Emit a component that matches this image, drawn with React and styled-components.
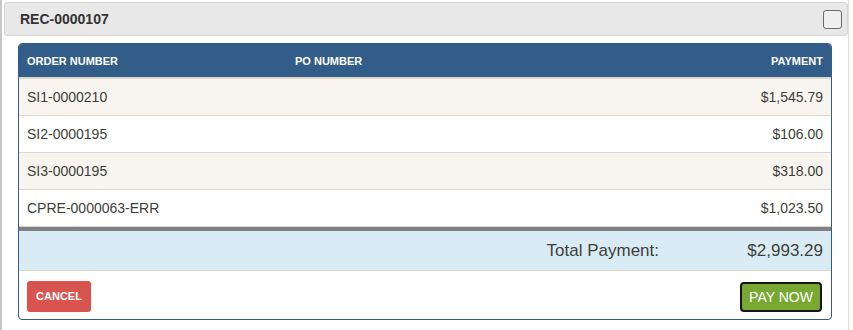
import styled, { createGlobalStyle } from "styled-components";

const GlobalStyle = createGlobalStyle`
  body {
    margin: 0;
    background: #fff;
    font-family: "Liberation Sans", Arial, sans-serif;
    color: #3e3f3a;
  }
`;

const orders = [
  { number: "SI1-0000210", po: "", payment: "$1,545.79" },
  { number: "SI2-0000195", po: "", payment: "$106.00" },
  { number: "SI3-0000195", po: "", payment: "$318.00" },
  { number: "CPRE-0000063-ERR", po: "", payment: "$1,023.50" },
];

export default function App() {
  return (
    <>
      <GlobalStyle />
      <Page>
        <Frame>
          <ReceiptBar>
            <ReceiptTitle>REC-0000107</ReceiptTitle>
            <Check />
          </ReceiptBar>
          <Panel>
            <HeadRow>
              <HeadCell>Order Number</HeadCell>
              <HeadCell>PO Number</HeadCell>
              <HeadCell align="right">Payment</HeadCell>
            </HeadRow>
            {orders.map((o, i) => (
              <Row key={o.number} striped={i % 2 === 0}>
                <Cell>{o.number}</Cell>
                <Cell>{o.po}</Cell>
                <Cell align="right">{o.payment}</Cell>
              </Row>
            ))}
            <TotalRow>
              <TotalLabel>Total Payment:</TotalLabel>
              <TotalAmount>$2,993.29</TotalAmount>
            </TotalRow>
            <Footer>
              <CancelButton>Cancel</CancelButton>
              <PayButton>PAY NOW</PayButton>
            </Footer>
          </Panel>
        </Frame>
        <Side />
      </Page>
    </>
  );
}

const Page = styled.div`
  display: flex;
  width: 853px;
  height: 330px;
  overflow: hidden;
`;

const Frame = styled.div`
  width: 844px;
  flex-shrink: 0;
  border-left: 2px solid #c6c6c6;
  border-right: 1px solid #dcdcdc;
  padding: 2px 0 0 2px;
  box-sizing: content-box;
`;

const Side = styled.div`
  flex: 1;
  background: #fbfaf6;
`;

const ReceiptBar = styled.div`
  display: flex;
  align-items: center;
  justify-content: space-between;
  height: 32px;
  background: #e8e8e8;
  border: 1px solid #d6d6d6;
  border-radius: 3px;
  padding: 0 5px 0 15px;
`;

const ReceiptTitle = styled.div`
  font-size: 14px;
  font-weight: bold;
  color: #333;
`;

const Check = styled.div`
  width: 17px;
  height: 17px;
  border: 1.5px solid #6b6b6b;
  border-radius: 3px;
  background: #efefef;
`;

const Panel = styled.div`
  width: 812px;
  margin: 7px 0 0 14px;
  border: 1px solid #325d88;
  border-radius: 4px;
  overflow: hidden;
  background: #fff;
`;

const HeadRow = styled.div`
  display: grid;
  grid-template-columns: 268px 1fr auto;
  align-items: center;
  height: 33px;
  background: #325d88;
  border-bottom: 2px solid #dfd7ca;
`;

const HeadCell = styled.div`
  padding: 0 8px;
  font-size: 11px;
  font-weight: bold;
  text-transform: uppercase;
  color: #fff;
  text-align: ${({ align }) => align || "left"};
`;

const Row = styled.div`
  display: grid;
  grid-template-columns: 268px 1fr auto;
  align-items: center;
  height: 36px;
  background: ${({ striped }) => (striped ? "#f8f5f0" : "#fff")};
  border-bottom: 1px solid #dfd7ca;
`;

const Cell = styled.div`
  padding: 0 8px;
  font-size: 14px;
  color: #3e3f3a;
  text-align: ${({ align }) => align || "left"};
`;

const TotalRow = styled.div`
  display: grid;
  grid-template-columns: 1fr 172px;
  align-items: center;
  height: 39px;
  background: #d9ecf5;
  border-top: 4px solid #808080;
  border-bottom: 1px solid #dfd7ca;
  font-size: 17px;
  color: #3e3f3a;
`;

const TotalLabel = styled.div`
  text-align: right;
`;

const TotalAmount = styled.div`
  text-align: right;
  padding-right: 8px;
`;

const Footer = styled.div`
  display: flex;
  justify-content: space-between;
  align-items: center;
  height: 48px;
  padding: 0 9px 0 8px;
`;

const CancelButton = styled.button`
  width: 64px;
  height: 31px;
  border: none;
  border-radius: 3px;
  background: #d9534f;
  color: #fff;
  font-family: inherit;
  font-size: 11px;
  font-weight: bold;
  text-transform: uppercase;
  margin-top: 2px;
`;

const PayButton = styled.button`
  width: 82px;
  height: 30px;
  border: 2px solid #151515;
  border-radius: 4px;
  background: #78a832;
  color: #fff;
  font-family: inherit;
  font-size: 14px;
  margin-top: 3px;
`;
